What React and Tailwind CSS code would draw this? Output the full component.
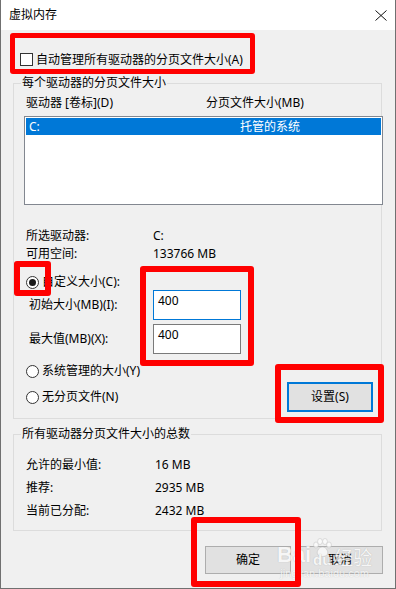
import React from "react";

function Radio({ checked }) {
  return (
    <div className="w-[13px] h-[13px] rounded-full border border-[#333333] bg-white flex items-center justify-center shrink-0">
      {checked && <div className="w-[7px] h-[7px] rounded-full bg-[#1a1a1a]" />}
    </div>
  );
}

function Paw() {
  return (
    <svg width="22" height="20" viewBox="0 0 22 20">
      <g fill="white" stroke="#b8b8b8" strokeWidth="0.6">
        <ellipse cx="5" cy="7" rx="2.4" ry="3" />
        <ellipse cx="9" cy="3.5" rx="2.4" ry="3" />
        <ellipse cx="14" cy="3.5" rx="2.4" ry="3" />
        <ellipse cx="18" cy="7" rx="2.4" ry="3" />
        <path d="M11.5 9 C7 9 5 15 7 17 C9 19 14 19 16 17 C18 15 16 9 11.5 9 Z" />
      </g>
    </svg>
  );
}

export default function App() {
  return (
    <div className="relative w-[396px] h-[589px] bg-[#f0f0f0] border-x border-b border-[#707070] overflow-hidden text-[12px] leading-4 text-black font-['Noto_Sans','Noto_Sans_CJK_SC',sans-serif]">
      {/* title bar */}
      <div className="h-[30px] bg-white flex items-center justify-between pl-2">
        <span>虚拟内存</span>
        <svg width="12" height="11" viewBox="0 0 12 11" className="mr-[8px]">
          <path d="M0.5 0.5 L11.5 10.5 M11.5 0.5 L0.5 10.5" stroke="#111" strokeWidth="1" />
        </svg>
      </div>

      {/* auto manage checkbox */}
      <div className="mt-[23px] ml-[19px] flex items-center h-[13px]">
        <div className="w-[13px] h-[13px] border border-[#333333] bg-white shrink-0" />
        <span className="ml-[3px] whitespace-nowrap">自动管理所有驱动器的分页文件大小(A)</span>
      </div>

      {/* group 1 */}
      <div className="relative mt-[17px] ml-[12px] w-[369px] h-[336px] border border-[#dcdcdc]">
        <span className="absolute left-[7px] top-[-9px] px-[1px] bg-[#f0f0f0] whitespace-nowrap">每个驱动器的分页文件大小</span>
        <div className="mt-[11px] pl-[12px] flex whitespace-nowrap">
          <span className="w-[180px]">驱动器 [卷标](D)</span>
          <span>分页文件大小(MB)</span>
        </div>
        <div className="mt-[5px] ml-[10px] w-[359px] h-[89px] border border-[#828790] bg-white p-[1px]">
          <div className="h-[17px] bg-[#0078d7] text-white flex items-center pl-[3px] whitespace-nowrap">
            <span className="w-[211px]">C:</span>
            <span>托管的系统</span>
          </div>
        </div>
        <div className="mt-[23px] pl-[12px] flex">
          <span className="w-[127px]">所选驱动器:</span>
          <span>C:</span>
        </div>
        <div className="mt-[2px] pl-[12px] flex">
          <span className="w-[127px]">可用空间:</span>
          <span>133766 MB</span>
        </div>
        <div className="mt-[12px] pl-[12px] flex items-center h-4">
          <Radio checked />
          <span className="ml-[3px]">自定义大小(C):</span>
        </div>
        <div className="flex items-center h-[30px]">
          <span className="pl-[15px] w-[139px] whitespace-nowrap">初始大小(MB)(I):</span>
          <div className="w-[88px] h-[30px] border border-[#0078d7] bg-white pl-[4px] pt-[2px]">400</div>
        </div>
        <div className="mt-[4px] flex items-center h-[30px]">
          <span className="pl-[15px] w-[139px] whitespace-nowrap">最大值(MB)(X):</span>
          <div className="w-[88px] h-[30px] border border-[#7a7a7a] bg-white pl-[4px] pt-[2px]">400</div>
        </div>
        <div className="mt-[9px] pl-[12px] flex items-center h-4">
          <Radio />
          <span className="ml-[3px]">系统管理的大小(Y)</span>
        </div>
        <div className="mt-[3px] pl-[12px] flex items-center h-[30px]">
          <Radio />
          <span className="ml-[3px]">无分页文件(N)</span>
          <div className="ml-auto mr-[8px] w-[86px] h-[30px] border-2 border-[#0078d7] bg-[#e1e1e1] flex items-center justify-center">
            设置(S)
          </div>
        </div>
      </div>

      {/* group 2 */}
      <div className="relative mt-[15px] ml-[12px] w-[369px] h-[97px] border border-[#dcdcdc]">
        <span className="absolute left-[7px] top-[-9px] px-[1px] bg-[#f0f0f0] whitespace-nowrap">所有驱动器分页文件大小的总数</span>
        <div className="mt-[22px] pl-[12px] flex">
          <span className="w-[129px]">允许的最小值:</span>
          <span>16 MB</span>
        </div>
        <div className="mt-[7px] pl-[12px] flex">
          <span className="w-[129px]">推荐:</span>
          <span>2935 MB</span>
        </div>
        <div className="mt-[7px] pl-[12px] flex">
          <span className="w-[129px]">当前已分配:</span>
          <span>2432 MB</span>
        </div>
      </div>

      {/* buttons */}
      <div className="mt-[15px] flex">
        <div className="ml-[204px] w-[86px] h-[28px] border border-[#adadad] bg-[#e1e1e1] flex items-center justify-center">确定</div>
        <div className="ml-[6px] w-[86px] h-[28px] border border-[#adadad] bg-[#e1e1e1] flex items-center justify-center">取消</div>
      </div>

      {/* baidu watermark */}
      <div className="absolute left-[276px] top-[538px] flex flex-col items-center pointer-events-none opacity-70">
        <div className="flex items-end leading-none text-white [text-shadow:0_0_1px_#9a9a9a]">
          <span className="text-[22px] font-bold font-['Liberation_Sans',sans-serif]">Bai</span>
          <div className="flex flex-col items-center -mb-[1px]">
            <Paw />
            <span className="text-[15px] font-bold font-['Liberation_Sans',sans-serif] -mt-[6px]">du</span>
          </div>
          <span className="ml-[1px] text-[19px] font-['Noto_Sans_CJK_SC',sans-serif]">经验</span>
        </div>
        <span className="mt-[1px] text-[11px] leading-3 text-white [text-shadow:0_0_1px_#a0a0a0] font-['Liberation_Sans',sans-serif]">jingyan.baidu.com</span>
      </div>

      {/* red annotation boxes */}
      <div className="absolute left-[9px] top-[33px] w-[245px] h-[41px] border-[5px] border-[#ff0000] rounded-[3px]" />
      <div className="absolute left-[13px] top-[261px] w-[37px] h-[35px] border-[6px] border-[#ff0000] rounded-[3px]" />
      <div className="absolute left-[139px] top-[266px] w-[114px] h-[100px] border-[6px] border-[#ff0000] rounded-[3px]" />
      <div className="absolute left-[274px] top-[364px] w-[109px] h-[59px] border-[6px] border-[#ff0000] rounded-[3px]" />
      <div className="absolute left-[190px] top-[517px] w-[110px] h-[70px] border-[6px] border-[#ff0000] rounded-[3px]" />
    </div>
  );
}
